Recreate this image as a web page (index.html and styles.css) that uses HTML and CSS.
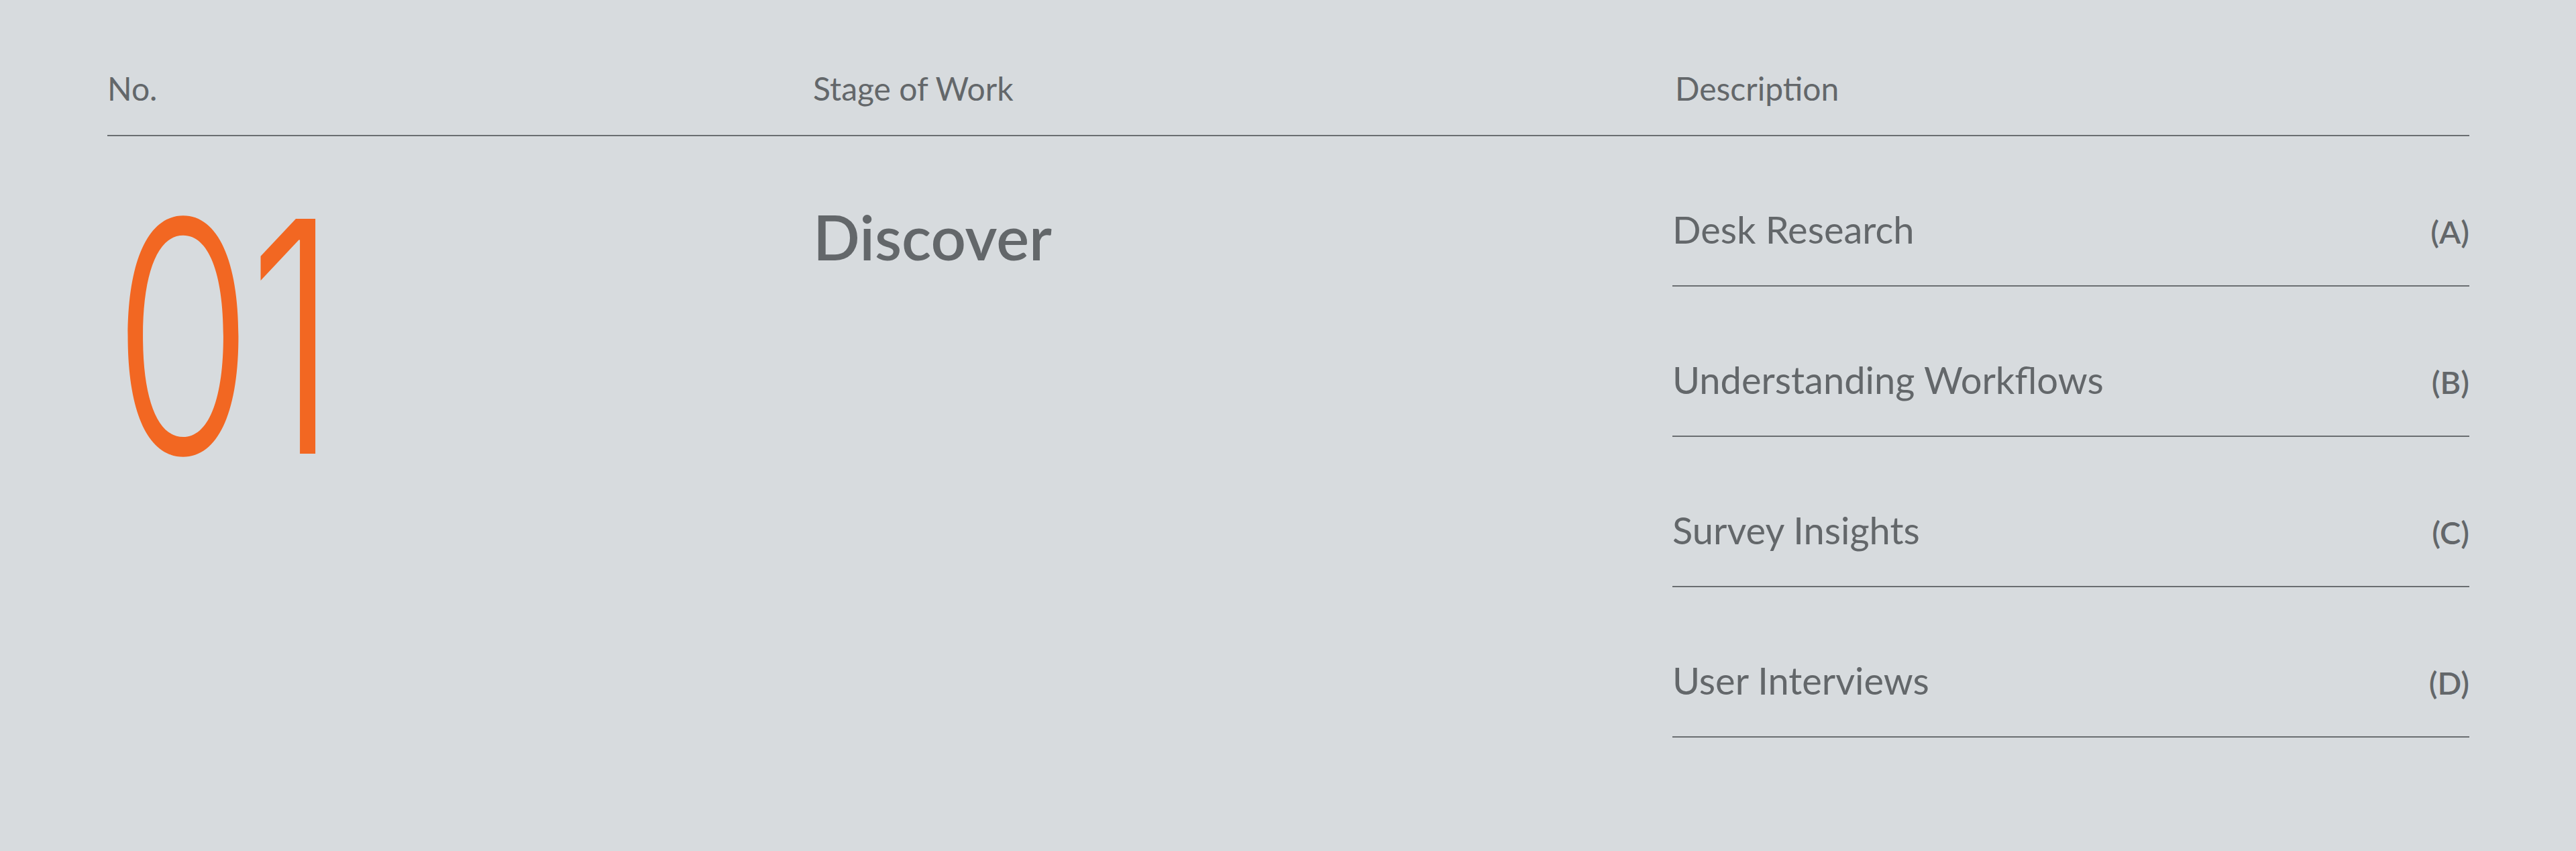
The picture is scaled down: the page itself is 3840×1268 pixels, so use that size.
FILE: index.html
```html
<!DOCTYPE html>
<html lang="en">
<head>
<meta charset="utf-8">
<title>Stages of Work</title>
<link rel="stylesheet" href="styles.css">
</head>
<body>
<main class="stages">
  <div class="head">
    <div class="head-cell">No.</div>
    <div class="head-cell">Stage of Work</div>
    <div class="head-cell head-desc">Description</div>
  </div>
  <section class="stage">
    <div class="stage-no"><span class="stage-digits">01</span></div>
    <h2 class="stage-name">Discover</h2>
    <ul class="desc-list">
      <li class="desc-item"><span class="desc-text">Desk Research</span><span class="desc-tag">(A)</span></li>
      <li class="desc-item"><span class="desc-text">Understanding Workflows</span><span class="desc-tag">(B)</span></li>
      <li class="desc-item"><span class="desc-text">Survey Insights</span><span class="desc-tag">(C)</span></li>
      <li class="desc-item"><span class="desc-text">User Interviews</span><span class="desc-tag">(D)</span></li>
    </ul>
  </section>
</main>
</body>
</html>
```

FILE: styles.css
```css
html, body {
  margin: 0;
  padding: 0;
}
body {
  background: #d7dbde;
  color: #63676a;
  font-family: "Lato", "Inter", "Liberation Sans", sans-serif;
  width: 3840px;
  height: 1268px;
  overflow: hidden;
}
.stages {
  padding: 0 159px 0 160px;
}
.head {
  display: grid;
  grid-template-columns: 1052px 1281px 1fr;
  padding-top: 104px;
  padding-bottom: 41px;
  border-bottom: 2px solid #6a6e71;
}
.head-cell {
  font-size: 48px;
  line-height: 56px;
  font-weight: 400;
}
.head-desc {
  padding-left: 4px;
}
.stage {
  display: grid;
  grid-template-columns: 1052px 1281px 1fr;
  align-items: start;
}
.stage-no {
  padding-top: 58px;
  padding-left: 9px;
}
.stage-digits {
  display: inline-block;
  font-family: "Inter", "Roboto", sans-serif;
  font-weight: 300;
  font-size: 481px;
  line-height: 1;
  color: #f26722;
  letter-spacing: -10px;
  transform: scaleX(0.7);
  transform-origin: 0 0;
}
.stage-name {
  margin: 0;
  padding-top: 95px;
  font-size: 92px;
  line-height: 1.2;
  font-weight: 600;
}
.desc-list {
  list-style: none;
  margin: 0;
  padding: 0;
}
.desc-item {
  display: flex;
  justify-content: space-between;
  align-items: baseline;
  padding: 106px 0 50px;
  border-bottom: 2px solid #6a6e71;
}
.desc-text {
  font-size: 56px;
  line-height: 66px;
}
.desc-tag {
  font-size: 47px;
  font-weight: 600;
  line-height: 1.2;
}
```
